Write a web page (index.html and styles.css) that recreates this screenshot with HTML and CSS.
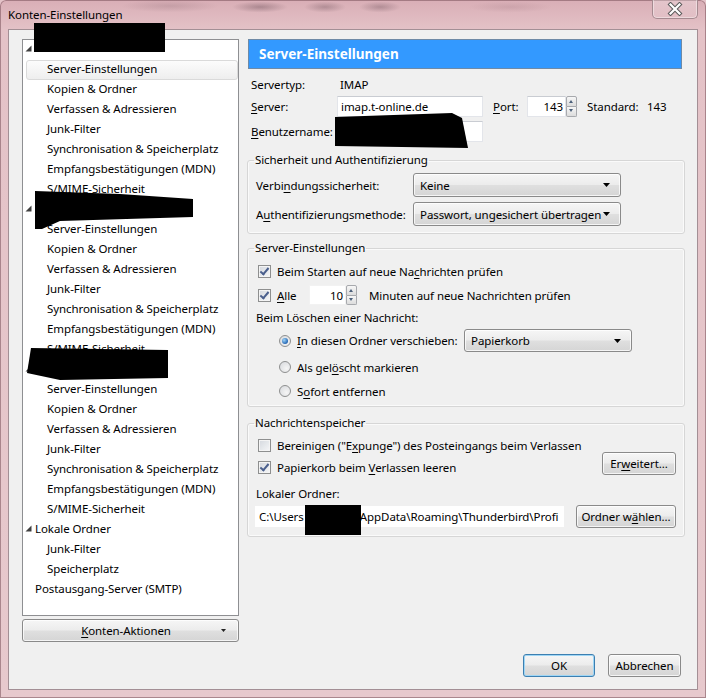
FILE: index.html
```html
<!DOCTYPE html>
<html lang="de">
<head>
<meta charset="utf-8">
<title>Konten-Einstellungen</title>
<link rel="stylesheet" href="styles.css">
</head>
<body>
<div class="window">
  <div class="titlebar">
    <span class="title">Konten-Einstellungen</span>
    <button class="close" aria-label="Schließen">
      <svg width="18" height="14" viewBox="0 0 18 14"><path d="M4.5 2.5 L13.5 11.5 M13.5 2.5 L4.5 11.5" stroke="#5a5a5a" stroke-width="4.2" stroke-linecap="square"/><path d="M4.5 2.5 L13.5 11.5 M13.5 2.5 L4.5 11.5" stroke="#ffffff" stroke-width="2.2" stroke-linecap="square"/></svg>
    </button>
  </div>
  <div class="client">
    <div class="main">
      <div class="left">
        <ul class="tree">
          <li class="acct"><svg class="twisty" width="7" height="7" viewBox="0 0 7 7"><path d="M6.5 0.5 V6.5 H0.5 Z" fill="#404040"/></svg><span class="acct-name"></span></li>
          <li class="sel">Server-Einstellungen</li>
          <li>Kopien &amp; Ordner</li>
          <li>Verfassen &amp; Adressieren</li>
          <li>Junk-Filter</li>
          <li>Synchronisation &amp; Speicherplatz</li>
          <li>Empfangsbestätigungen (MDN)</li>
          <li>S/MIME-Sicherheit</li>
          <li class="acct"><svg class="twisty" width="7" height="7" viewBox="0 0 7 7"><path d="M6.5 0.5 V6.5 H0.5 Z" fill="#404040"/></svg><span class="acct-name"></span></li>
          <li>Server-Einstellungen</li>
          <li>Kopien &amp; Ordner</li>
          <li>Verfassen &amp; Adressieren</li>
          <li>Junk-Filter</li>
          <li>Synchronisation &amp; Speicherplatz</li>
          <li>Empfangsbestätigungen (MDN)</li>
          <li>S/MIME-Sicherheit</li>
          <li class="acct"><svg class="twisty" width="7" height="7" viewBox="0 0 7 7"><path d="M6.5 0.5 V6.5 H0.5 Z" fill="#404040"/></svg><span class="acct-name"></span></li>
          <li>Server-Einstellungen</li>
          <li>Kopien &amp; Ordner</li>
          <li>Verfassen &amp; Adressieren</li>
          <li>Junk-Filter</li>
          <li>Synchronisation &amp; Speicherplatz</li>
          <li>Empfangsbestätigungen (MDN)</li>
          <li>S/MIME-Sicherheit</li>
          <li class="acct"><svg class="twisty" width="7" height="7" viewBox="0 0 7 7"><path d="M6.5 0.5 V6.5 H0.5 Z" fill="#404040"/></svg><span class="acct-name">Lokale Ordner</span></li>
          <li>Junk-Filter</li>
          <li>Speicherplatz</li>
          <li class="top">Postausgang-Server (SMTP)</li>
        </ul>
        <button class="btn menu-btn"><span class="menu-label"><u>K</u>onten-Aktionen</span><svg class="menu-arrow" width="5" height="3" viewBox="0 0 5 3"><path d="M0 0 H5 L2.5 3 Z" fill="#222"/></svg></button>
      </div>

      <div class="right">
        <div class="page-header">Server-Einstellungen</div>
        <div class="info">
          <div class="row r-type"><span class="lbl">Servertyp:</span><span class="val">IMAP</span></div>
          <div class="row r-server">
            <span class="lbl"><u>S</u>erver:</span>
            <span class="textbox tb-server">imap.t-online.de</span>
            <span class="port-lbl"><u>P</u>ort:</span>
            <span class="spin spin-port"><span class="textbox num">143</span><span class="spinbtns"><span class="up"></span><span class="down"></span></span></span>
            <span class="std-lbl">Standard:</span><span>143</span>
          </div>
          <div class="row r-user"><span class="lbl"><u>B</u>enutzername:</span><span class="textbox tb-server"></span></div>
        </div>

        <fieldset class="group g-sec">
          <legend>Sicherheit und Authentifizierung</legend>
          <div class="row r-combo"><span class="lbl2">Verbi<u>n</u>dungssicherheit:</span><span class="combo cb-wide">Keine<svg class="arrow" width="7" height="4" viewBox="0 0 7 4"><path d="M0 0 H7 L3.5 4 Z" fill="#000"/></svg></span></div>
          <div class="row r-combo r-combo2"><span class="lbl2">A<u>u</u>thentifizierungsmethode:</span><span class="combo cb-wide">Passwort, ungesichert übertragen<svg class="arrow" width="7" height="4" viewBox="0 0 7 4"><path d="M0 0 H7 L3.5 4 Z" fill="#000"/></svg></span></div>
        </fieldset>

        <fieldset class="group g-srv">
          <legend>Server-Einstellungen</legend>
          <div class="row r-chk"><span class="check on"></span><span>Beim Starten auf neue Na<u>c</u>hrichten prüfen</span></div>
          <div class="row r-chk r-every">
            <span class="check on"></span><span class="alle"><u>A</u>lle</span>
            <span class="spin spin-min"><span class="textbox num">10</span><span class="spinbtns"><span class="up"></span><span class="down"></span></span></span>
            <span class="minutes">Minuten auf neue Nachrichten prüfen</span>
          </div>
          <div class="row r-del">Beim Löschen einer Nachricht:</div>
          <div class="row r-radio r-move"><span class="radio on"></span><span class="move-lbl"><u>I</u>n diesen Ordner verschieben:</span><span class="combo cb-trash">Papierkorb<svg class="arrow" width="7" height="4" viewBox="0 0 7 4"><path d="M0 0 H7 L3.5 4 Z" fill="#000"/></svg></span></div>
          <div class="row r-radio r-mark"><span class="radio"></span><span>Als gel<u>ö</u>scht markieren</span></div>
          <div class="row r-radio r-now"><span class="radio"></span><span>S<u>o</u>fort entfernen</span></div>
        </fieldset>

        <fieldset class="group g-store">
          <legend>Nachrichtenspeicher</legend>
          <div class="store-top">
            <div class="store-checks">
              <div class="row r-chk"><span class="check"></span><span>Bereinigen ("E<u>x</u>punge") des Posteingangs beim Verlassen</span></div>
              <div class="row r-chk r-chk2"><span class="check on"></span><span>Papierkorb beim <u>V</u>erlassen leeren</span></div>
            </div>
            <button class="btn btn-adv">Er<u>w</u>eitert...</button>
          </div>
          <div class="row r-local">Lokaler Ordner:</div>
          <div class="row r-path"><span class="textbox tb-path">C:\Users<span class="hidden-user"></span>\AppData\Roaming\Thunderbird\Profi</span><button class="btn btn-choose">Ordner w<u>ä</u>hlen...</button></div>
        </fieldset>
      </div>
    </div>
    <div class="footer">
      <button class="btn ok">OK</button>
      <button class="btn cancel">Abbrechen</button>
    </div>
  </div>

  <svg class="redactions" width="706" height="698" viewBox="0 0 706 698" aria-hidden="true">
    <rect x="34" y="23" width="131" height="29" fill="#000"/>
    <polygon points="35,191 120,194 193,199 193,217 60,221 42,229 35,229" fill="#000"/>
    <polygon points="31,348 168,350 168,378 60,380 27,373" fill="#000"/>
    <polygon points="335,117 452,113 462,118 468,148 335,146" fill="#000"/>
    <rect x="305" y="505" width="56" height="30" fill="#000"/>
  </svg>
</div>
</body>
</html>
```

FILE: styles.css
```css
* { box-sizing: border-box; }
html, body { margin: 0; padding: 0; }
body {
  font-family: "Noto Sans", "Open Sans", sans-serif;
  font-size: 11.5px;
  letter-spacing: -0.08px;
  color: #000;
  background: #e4c3c8;
}
u { text-decoration: underline; text-underline-offset: 2px; }

.window {
  position: relative;
  width: 706px;
  height: 698px;
  display: flex;
  flex-direction: column;
  background:
    radial-gradient(ellipse 70px 9px at 170px 6px, rgba(120, 90, 100, .22), transparent 70%),
    radial-gradient(ellipse 40px 8px at 260px 7px, rgba(80, 55, 65, .35), transparent 70%),
    radial-gradient(ellipse 30px 8px at 325px 7px, rgba(80, 55, 65, .3), transparent 70%),
    radial-gradient(ellipse 30px 8px at 380px 7px, rgba(80, 55, 65, .3), transparent 70%),
    radial-gradient(ellipse 60px 8px at 510px 7px, rgba(160, 120, 130, .25), transparent 70%),
    linear-gradient(#d9aeb6, #e4c2c7 30px, #e7c9cd);
  box-shadow: inset 0 0 0 1px rgba(120, 80, 90, .55);
  border-radius: 6px 6px 0 0;
  overflow: hidden;
}

.titlebar {
  height: 29px;
  display: flex;
  justify-content: space-between;
  align-items: flex-start;
  padding: 0 8px 0 8px;
}
.title { margin-top: 7px; line-height: 16px; color: #000; }
.close {
  width: 46px;
  height: 20px;
  margin-top: -1px;
  border: 1px solid #a58a90;
  border-top: none;
  border-radius: 0 0 5px 5px;
  background: linear-gradient(rgba(255,255,255,.3), rgba(255,255,255,.08));
  box-shadow: inset 0 0 0 1px rgba(255,255,255,.4);
  display: flex;
  align-items: center;
  justify-content: center;
  padding: 0;
}

.client {
  flex: 1;
  margin: 0 8px 8px;
  background: #f0f0f0;
  border: 1px solid #a38f95;
  display: flex;
  flex-direction: column;
  padding: 9px 16px 0 13px;
}

.main { display: flex; gap: 8px; height: 603px; }
.left { width: 217px; display: flex; flex-direction: column; gap: 3px; }

.tree {
  list-style: none;
  margin: 0;
  padding: 0;
  height: 577px;
  border: 1px solid #8e8f92;
  background: #fff;
}
.tree li {
  height: 20px;
  line-height: 17px;
  padding-left: 24px;
  white-space: nowrap;
}
.tree li.acct { padding-left: 2px; display: flex; align-items: flex-start; gap: 3px; }
.tree li.acct .twisty { margin-top: 5px; }
.tree li.top { padding-left: 12px; }
.tree li.sel {
  margin-left: 3px;
  padding-left: 20px;
  line-height: 15px;
  border: 1px solid #dadada;
  border-radius: 3px;
  background: linear-gradient(#fcfcfc, #eeeeee);
}

.btn {
  font: inherit;
  letter-spacing: inherit;
  color: #000;
  height: 23px;
  padding: 0;
  border: 1px solid #8a8a8a;
  border-radius: 3px;
  background: linear-gradient(#f6f6f6 0%, #ececec 48%, #dfdfdf 52%, #d5d5d5 100%);
  box-shadow: inset 0 0 0 1px rgba(255,255,255,.75);
  display: inline-flex;
  align-items: center;
  justify-content: center;
}
.menu-btn { width: 217px; position: relative; }
.menu-label { flex: 1; text-align: center; padding-left: 8px; }
.menu-arrow { margin-right: 12px; }

.right { width: 438px; }
.page-header {
  margin: 0 3px 0 1px;
  height: 30px;
  background: #3399ff;
  border: 1px solid #6f8aa6;
  color: #fff;
  font-weight: bold;
  font-size: 13.5px;
  letter-spacing: 0;
  line-height: 29px;
  padding-left: 10px;
}

.row { display: flex; align-items: center; white-space: nowrap; }
.info { padding-left: 4px; }
.r-type { margin-top: 5px; height: 20px; }
.r-server { margin-top: 2px; height: 21px; }
.r-user { margin-top: 4px; height: 21px; }
.lbl { width: 86px; }
.val { padding-left: 3px; }

.textbox {
  display: inline-block;
  background: #fff;
  border: 1px solid #e3e5ea;
  border-top-color: #c9ccd2;
  height: 21px;
  line-height: 19px;
  padding: 0 3px;
  overflow: hidden;
  white-space: nowrap;
}
.tb-server { width: 146px; }
.port-lbl { margin-left: 10px; width: 34px; }
.spin { display: inline-flex; height: 21px; }
.spin .num { text-align: right; padding-right: 2px; }
.spin-port .num { width: 39px; }
.spinbtns { display: flex; flex-direction: column; width: 11px; height: 100%; }
.spinbtns span {
  flex: 1;
  border: 1px solid #a7a9ad;
  background: linear-gradient(#f7f7f7, #dcdcdc);
  position: relative;
}
.spinbtns span.up { border-radius: 2px 2px 0 0; }
.spinbtns span.down { border-radius: 0 0 2px 2px; border-top: none; }
.spinbtns span::after {
  content: "";
  position: absolute;
  left: 2px;
  top: 3px;
  border-left: 2.5px solid transparent;
  border-right: 2.5px solid transparent;
}
.spinbtns span.up::after { border-bottom: 3px solid #4c607a; }
.spinbtns span.down::after { border-top: 3px solid #4c607a; top: 2px; }
.std-lbl { margin-left: 10px; width: 60px; }

.group {
  margin: 0;
  border: 1px solid #d6d6d6;
  border-radius: 3px;
  box-shadow: inset 0 0 0 1px #fafafa;
  padding: 0 8px;
  min-width: 0;
}
.group legend {
  padding: 0 1px;
  margin-left: -2px;
  line-height: 16px;
}
.g-sec { margin-top: 10px; padding-top: 5px; padding-bottom: 7px; }
.r-combo { height: 24px; }
.r-combo2 { margin-top: 5px; }
.lbl2 { width: 157px; }

.combo {
  position: relative;
  display: inline-flex;
  align-items: center;
  height: 24px;
  padding-left: 6px;
  border: 1px solid #8a8a8a;
  border-radius: 3px;
  background: linear-gradient(#f6f6f6 0%, #ececec 48%, #dfdfdf 52%, #d5d5d5 100%);
  box-shadow: inset 0 0 0 1px rgba(255,255,255,.75);
}
.combo .arrow { position: absolute; right: 10px; top: 50%; margin-top: -2px; }
.cb-wide { width: 208px; }

.g-srv { margin-top: 6px; padding-top: 5px; padding-bottom: 5px; }
.r-chk { height: 20px; }
.check {
  width: 13px;
  height: 13px;
  margin: 0 6px 0 2px;
  border: 1px solid #8e8f8f;
  background: linear-gradient(135deg, #d4d8de, #f6f7f8);
  box-shadow: inset 0 0 0 1px #f4f4f4;
  position: relative;
  flex: none;
}
.check.on::after {
  content: "";
  position: absolute;
  left: 3px;
  top: 0px;
  width: 3px;
  height: 7px;
  border: solid #4a5f8d;
  border-width: 0 2px 2px 0;
  transform: rotate(40deg);
}
.r-every { margin-top: 4px; }
.alle { width: 32px; }
.spin-min .num { width: 37px; }
.spin-min { height: 20px; }
.spin-min .textbox { height: 20px; border-color: #f2f2f2; }
.minutes { margin-left: 12px; }
.r-del { margin-top: 2px; height: 20px; }
.r-radio { height: 20px; padding-left: 23px; }
.r-move { margin-top: 2px; height: 23px; }
.r-mark { margin-top: 5px; }
.r-now { margin-top: 4px; }
.radio {
  width: 12px;
  height: 12px;
  margin-right: 6px;
  border-radius: 50%;
  border: 1px solid #8e8f8f;
  background: radial-gradient(circle at 65% 65%, #f5f5f5, #d6d8dc);
  position: relative;
  flex: none;
}
.radio.on::after {
  content: "";
  position: absolute;
  left: 2px;
  top: 2px;
  width: 6px;
  height: 6px;
  border-radius: 50%;
  background: radial-gradient(circle at 35% 35%, #9fd4f8, #2567b4 70%, #1b4c8e);
}
.move-lbl { width: 167px; }
.cb-trash { width: 168px; height: 23px; }

.g-store { margin-top: 8px; padding-top: 4px; padding-bottom: 8px; }
.store-top { display: flex; justify-content: space-between; align-items: flex-end; }
.r-chk2 { margin-top: 2px; }
.btn-adv { width: 74px; margin-bottom: 2px; }
.r-local { margin-top: 6px; height: 20px; }
.r-path { margin-top: 2px; height: 23px; }
.tb-path { width: 311px; height: 23px; line-height: 21px; margin-left: -2px; border-color: #f0f0f0; padding-left: 4px; }
.hidden-user { display: inline-block; width: 52px; height: 10px; }
.btn-choose { width: 100px; margin-left: 11px; }

.footer {
  margin-top: 12px;
  display: flex;
  justify-content: flex-end;
  gap: 13px;
}
.footer .ok {
  width: 72px;
  border-color: #3c7fb1;
  box-shadow: inset 0 0 0 1px #9fd6f5;
}
.footer .cancel { width: 73px; }

.redactions {
  position: absolute;
  left: 0;
  top: 0;
  pointer-events: none;
}
```
